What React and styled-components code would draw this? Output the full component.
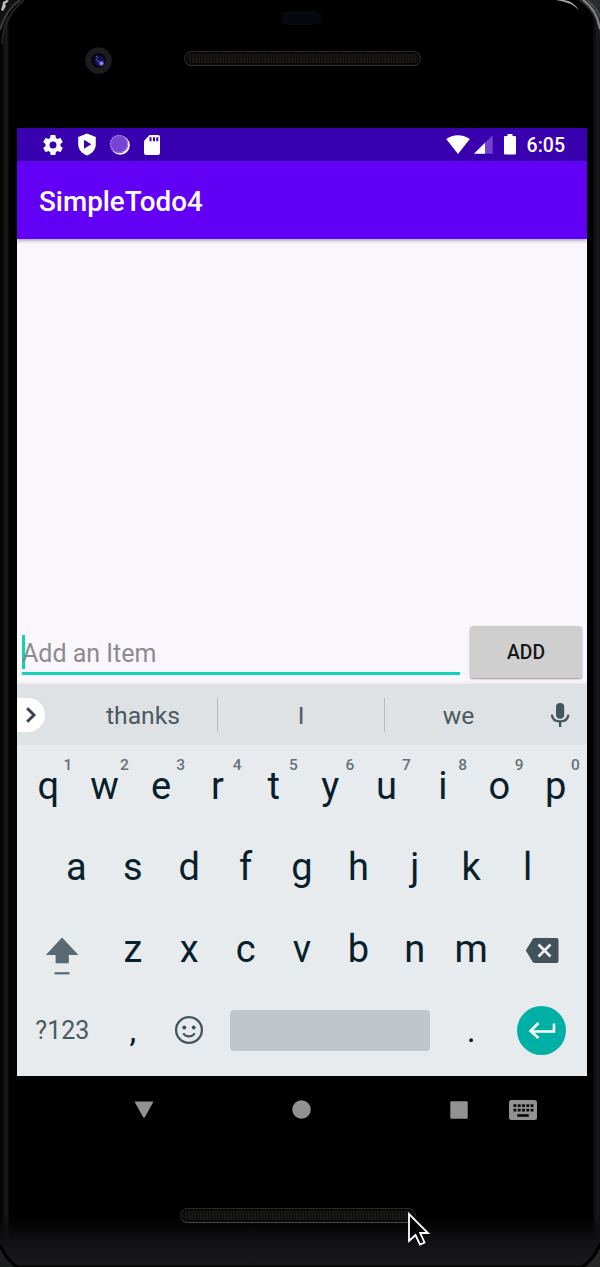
import React from "react";
import styled, { createGlobalStyle } from "styled-components";

const Global = createGlobalStyle`
  *, *::before, *::after { box-sizing: border-box; }
  html, body { margin: 0; padding: 0; background: #08080a; }
  body { font-family: Roboto, "Noto Sans", sans-serif; overflow: hidden; }
  svg { display: block; }
`;

const Device = styled.div`
  position: relative;
  width: 600px;
  height: 1267px;
  display: flex;
  flex-direction: column;
  padding: 0 13px 0 17px;
  overflow: hidden;
  background:
    linear-gradient(to bottom, transparent 0 1214px, rgba(8, 8, 9, 0.6) 1226px, #111113 1242px, #1a1a1c 1265px, #050505 1266px),
    linear-gradient(to right, #020202 0, #060606 2px, #0c0b0c 3px, #141315 5px, #19181a 7px, #09090a 8.5px, #000 10px,
      #000 592px, #0d0b0d 594px, #1b191c 597px, #121113 600px);
`;

const FrameEdges = styled.svg`
  position: absolute;
  inset: 0;
  pointer-events: none;
`;

const TopBezel = styled.div`
  height: 128px;
  flex: none;
  display: grid;
  grid-template-columns: 167px 237px 1fr;
  grid-template-rows: 11px 14px 1fr;
`;

const Sensor = styled.div`
  grid-area: 2 / 2;
  justify-self: center;
  width: 41px;
  height: 14px;
  border-radius: 7px;
  background: #060810;
  margin-left: -3px;
`;

const CameraSlot = styled.div`
  grid-area: 3 / 1;
  padding: 22px 0 0 68px;
`;

const SpeakerSlot = styled.div`
  grid-area: 3 / 2;
  padding-top: 26px;
`;

const Speaker = styled.div`
  width: ${(p) => p.$width}px;
  height: 15px;
  border-radius: 8px;
  border: 1px solid #29282a;
  border-bottom: 1.5px solid ${(p) => p.$rim};
  padding: 2px;
  background: #090909;
  &::before {
    content: "";
    display: block;
    height: 100%;
    border-radius: 5px;
    background: repeating-linear-gradient(to right, #1b1916 0 1px, #0e0d0c 1px 2px, #171512 2px 3px);
  }
`;

const Screen = styled.main`
  width: 570px;
  height: 948px;
  flex: none;
  display: flex;
  flex-direction: column;
  overflow: hidden;
  background: #f9f7fb;
`;

const StatusBar = styled.div`
  height: 33px;
  flex: none;
  display: flex;
  align-items: center;
  justify-content: space-between;
  padding: 0 22px 0 23.5px;
  background: #3900b0;
  color: #fff;
`;

const StatusIcons = styled.div`
  display: flex;
  align-items: center;
  gap: ${(p) => p.$gap}px;
`;

const Clock = styled.span`
  font-size: 19.5px;
  font-weight: 500;
  line-height: 33px;
  margin: 2px 0 0 2px;
`;

const AppBar = styled.header`
  height: 78px;
  flex: none;
  display: flex;
  align-items: center;
  padding: 3px 22px 0;
  background: #6200f5;
  color: #fff;
  box-shadow: 0 1px 4px rgba(0, 0, 0, 0.45);
  position: relative;
`;

const Title = styled.h1`
  margin: 0;
  font-size: 27.8px;
  font-weight: 500;
`;

const Content = styled.section`
  flex: 1;
  display: flex;
  align-items: flex-end;
  padding: 0 5px 6px;
`;

const Field = styled.div`
  width: 438px;
  height: 43px;
  margin: 0 10px 3px 0;
  border-bottom: 3px solid #0fd2b7;
  display: flex;
  align-items: flex-start;
  color: #8d8b8f;
  font-size: 25px;
`;

const Caret = styled.i`
  width: 3px;
  height: 34px;
  margin: 3px -3px 0 0;
  background: #0fd2b7;
`;

const Hint = styled.span`
  line-height: 30px;
  margin-top: 7px;
`;

const AddButton = styled.button`
  width: 112px;
  height: 52px;
  border: 0;
  padding: 0;
  border-radius: 3px;
  background: #cfcfd0;
  color: #161616;
  font: 500 19.3px Roboto, sans-serif;
  box-shadow: 0 1px 2px rgba(0, 0, 0, 0.4);
`;

const Suggestions = styled.div`
  height: 61px;
  flex: none;
  display: flex;
  align-items: center;
  background: #dee2e5;
  box-shadow: 0 -1px 3px #e5e7e9;
`;

const Expand = styled.div`
  width: 28px;
  height: 34px;
  border-radius: 0 17px 17px 0;
  background: #fff;
  display: flex;
  align-items: center;
  padding-left: 8px;
  margin-top: 1px;
`;

const Suggestion = styled.div`
  width: ${(p) => p.$width}px;
  height: 34px;
  line-height: 36px;
  text-align: center;
  font-size: 24.7px;
  color: #4b5961;
  padding-left: ${(p) => p.$shift || 0}px;
  border-right: ${(p) => (p.$divided ? "1.5px solid #b6bcc0" : "0")};
`;

const MicSlot = styled.div`
  flex: 1;
  display: flex;
  justify-content: center;
`;

const Keyboard = styled.div`
  flex: none;
  height: 331px;
  padding: 0 3px;
  background: #e7ebee;
`;

const KeyRow = styled.div`
  height: 81.5px;
  display: flex;
  justify-content: center;
  align-items: stretch;
`;

const Key = styled.div`
  width: ${(p) => p.$width || 56.4}px;
  padding-top: ${(p) => p.$drop || 0}px;
  display: flex;
  align-items: center;
  justify-content: center;
  position: relative;
  font-size: ${(p) => p.$size || 38}px;
  color: ${(p) => p.$color || "#07202a"};
`;

const Digit = styled.sup`
  position: absolute;
  top: 11px;
  left: 43.5px;
  font-size: 15.5px;
  font-weight: 500;
  line-height: 18px;
  color: #65727a;
`;

const Space = styled.div`
  width: 200px;
  height: 41px;
  border-radius: 4px;
  background: #c1c6ca;
`;

const Enter = styled.div`
  width: 49px;
  height: 49px;
  border-radius: 50%;
  background: #00b0a5;
  display: flex;
  align-items: center;
  justify-content: center;
`;

const NavBar = styled.nav`
  height: 67px;
  flex: none;
  display: flex;
  align-items: center;
  padding-left: 117px;
`;

const Gap = styled.span`
  width: ${(p) => p.$width}px;
`;

const BottomBezel = styled.div`
  flex: 1;
  padding: 65px 0 0 163px;
`;

const Pointer = styled.svg`
  position: absolute;
  left: 404.5px;
  top: 1210px;
`;

const Camera = () => (
  <svg width="28" height="28" viewBox="0 0 28 28">
    <circle cx="13.500" cy="13.500" r="13.300" fill="#1c1b1e" />
    <circle cx="13.500" cy="13.500" r="7.500" fill="#080815" />
    <circle cx="14.500" cy="14" r="5" fill="#13104a" />
    <path d="M11 9l2 2M11 12l3 3" stroke="#4744ab" strokeWidth="1.400" />
    <circle cx="16.300" cy="16.300" r="2.600" fill="#5145b9" />
    <circle cx="16.500" cy="16.500" r="1.300" fill="#a5a0e8" />
  </svg>
);

const Gear = () => (
  <svg width="24" height="24" viewBox="0 0 24 24" fill="#fff">
    <path d="M19.43 12.98c.04-.32.07-.64.07-.98s-.03-.66-.07-.98l2.11-1.65c.19-.15.24-.42.12-.64l-2-3.46c-.12-.22-.39-.3-.61-.22l-2.49 1c-.52-.4-1.08-.73-1.69-.98l-.38-2.65A.49.49 0 0 0 14 2h-4c-.25 0-.46.18-.49.42l-.38 2.65c-.61.25-1.17.59-1.69.98l-2.49-1c-.23-.09-.49 0-.61.22l-2 3.46c-.13.22-.07.49.12.64l2.11 1.65c-.04.32-.07.65-.07.98s.03.66.07.98l-2.11 1.65c-.19.15-.24.42-.12.64l2 3.46c.12.22.39.3.61.22l2.49-1c.52.4 1.08.73 1.69.98l.38 2.65c.03.24.24.42.49.42h4c.25 0 .46-.18.49-.42l.38-2.65c.61-.25 1.17-.59 1.69-.98l2.49 1c.23.09.49 0 .61-.22l2-3.46c.12-.22.07-.49-.12-.64l-2.11-1.65zM12 15.5A3.5 3.5 0 1 1 12 8.500a3.5 3.5 0 0 1 0 7z" />
  </svg>
);

const Shield = () => (
  <svg width="20" height="23" viewBox="0 0 20 23">
    <path d="M10 .6l8.800 3.300v7.300c0 5-3.500 9.300-8.800 11.200C4.700 20.500 1.200 16.200 1.200 11.200V3.900z" fill="#fff" />
    <path d="M7 6.800l7.300 4.500L7 15.800z" fill="#3900b0" />
  </svg>
);

const Disc = () => (
  <svg width="22" height="22" viewBox="0 0 22 22">
    <circle cx="11.200" cy="11.200" r="9.600" fill="#fff" />
    <circle cx="10" cy="10" r="9.200" fill="#7844d3" />
    <circle cx="10" cy="10" r="8.500" fill="none" stroke="#a98ae2" strokeWidth="1.300" strokeDasharray="1.500 1.400" />
  </svg>
);

const SdCard = () => (
  <svg width="18" height="22" viewBox="0 0 18 22">
    <path d="M6.500 1H15a2 2 0 0 1 2 2v16a2 2 0 0 1-2 2H3a2 2 0 0 1-2-2V7z" fill="#fff" />
    <path d="M7.500 3.300v4M11 3.300v4M14.300 3.300v4" stroke="#3900b0" strokeWidth="2" />
  </svg>
);

const Wifi = () => (
  <svg width="24" height="21" viewBox="0 0 24 21">
    <path d="M.2 5.100C6.700-.2 17.300-.2 23.800 5.100L12 20z" fill="#fff" />
  </svg>
);

const Signal = () => (
  <svg width="19" height="19" viewBox="0 0 19 19">
    <path d="M0 18.800L18.700.2v18.600z" fill="#7542cf" />
    <path d="M0 18.800L11 7.800v11z" fill="#fff" />
  </svg>
);

const Battery = () => (
  <svg width="12" height="21" viewBox="0 0 12 21">
    <path d="M3.500 0h5v2H11a1 1 0 0 1 1 1v16.500a1 1 0 0 1-1 1H1a1 1 0 0 1-1-1V3a1 1 0 0 1 1-1h2.500z" fill="#fff" />
  </svg>
);

const Chevron = () => (
  <svg width="12" height="18" viewBox="0 0 12 18">
    <path d="M2.200 2.200L9 9l-6.800 6.800" fill="none" stroke="#35444c" strokeWidth="2.900" />
  </svg>
);

const Mic = () => (
  <svg width="20" height="26" viewBox="0 0 20 26">
    <rect x="6" y="1" width="8.200" height="15.800" rx="4.100" fill="#46555d" />
    <path d="M1.800 12.700c.4 4.400 3.700 6.800 8.300 6.800s7.900-2.400 8.300-6.800M10.100 19v6" fill="none" stroke="#46555d" strokeWidth="2.300" />
  </svg>
);

const Shift = () => (
  <svg width="34" height="40" viewBox="0 0 34 40">
    <path d="M17 1.500L33.500 19H23.800v8.300H10.600V19H.8z" fill="#5a6971" />
    <path d="M9.500 37.300h15" stroke="#5a6971" strokeWidth="2.200" />
  </svg>
);

const Smile = () => (
  <svg width="30" height="30" viewBox="0 0 30 30" fill="none" stroke="#46555d">
    <circle cx="15" cy="15" r="12.900" strokeWidth="2.300" />
    <circle cx="10.300" cy="12.600" r="2" fill="#46555d" stroke="none" />
    <circle cx="19.700" cy="12.600" r="2" fill="#46555d" stroke="none" />
    <path d="M9.200 18.300c2.400 4.100 9.200 4.100 11.600 0" strokeWidth="2.200" />
  </svg>
);

const Backspace = () => (
  <svg width="34" height="27" viewBox="0 0 34 27">
    <path d="M9.800 1H31.500a2 2 0 0 1 2 2v21a2 2 0 0 1-2 2H9.800q-1.400 0-2.200-1.300L.8 13.500 7.600 2.300Q8.400 1 9.800 1z" fill="#43525a" />
    <path d="M13.500 7.500l12 12M25.500 7.500l-12 12" stroke="#eef1f3" strokeWidth="2.700" />
  </svg>
);

const Return = () => (
  <svg width="28" height="18" viewBox="0 0 28 18">
    <path d="M26 2.500v8H3M10.500 2L2.500 10l8 7" fill="none" stroke="#fff" strokeWidth="2.600" />
  </svg>
);

const KeyboardIcon = () => (
  <svg width="28" height="20" viewBox="0 0 28 20">
    <rect width="28" height="20" rx="2.500" fill="#929292" />
    <path d="M4.500 5.700h20M4.500 10.100h20" stroke="#0b0b0b" strokeWidth="2.800" strokeDasharray="2.900 1.370" />
    <path d="M8.300 15.500h11.500" stroke="#0b0b0b" strokeWidth="2.700" />
  </svg>
);

const topRow = "qwertyuiop".split("");
const homeRow = "asdfghjkl".split("");
const lowerRow = "zxcvbnm".split("");

export default function App() {
  return (
    <>
      <Global />
      <Device>
        <FrameEdges width="600" height="1267" viewBox="0 0 600 1267" fill="none">
          <path d="M0 0H22Q2 10 0 34z" fill="#121212" />
          <path d="M3 2l4-2 2 1-4 3 1 2-3 5-2-1 1-3z" fill="#bdbdbd" />
          <path d="M0 30Q5 11 20 0" stroke="#3b3c3b" strokeWidth="2" />
          <path d="M2 44Q4 16 24 0" stroke="#222322" strokeWidth="2" />
          <path d="M578 0H600V38Q597 12 578 0z" fill="#2a2b2b" />
          <path d="M583 0Q597 10 600 29" stroke="#83888c" strokeWidth="2" />
          <path d="M587 0Q596 7 600 17" stroke="#474a4c" strokeWidth="2" />
          <path d="M556 0Q571 2 579 10Q573 1 564 0z" fill="#a3a8ab" />
          <path d="M0 1247Q5 1259 16 1267H0z" fill="#1c1d1d" />
          <path d="M0 1245Q5 1258 17 1267" stroke="#000" strokeWidth="3" />
          <path d="M600 1247Q596 1259 585 1267H600z" fill="#252525" />
          <path d="M600 1244Q595 1258 582 1267" stroke="#000" strokeWidth="3" />
        </FrameEdges>
        <TopBezel>
          <Sensor />
          <CameraSlot><Camera /></CameraSlot>
          <SpeakerSlot><Speaker $width={237} $rim="#343334" /></SpeakerSlot>
        </TopBezel>
        <Screen>
          <StatusBar>
            <StatusIcons $gap={12}>
              <Gear /><Shield /><Disc /><SdCard />
            </StatusIcons>
            <StatusIcons $gap={4}>
              <Wifi /><Signal /><Gap $width={3} /><Battery /><Gap $width={1} /><Clock>6:05</Clock>
            </StatusIcons>
          </StatusBar>
          <AppBar><Title>SimpleTodo4</Title></AppBar>
          <Content>
            <Field><Caret /><Hint>Add an Item</Hint></Field>
            <AddButton>ADD</AddButton>
          </Content>
          <Suggestions>
            <Expand><Chevron /></Expand>
            <Suggestion $width={173} $divided $shift={24}>thanks</Suggestion>
            <Suggestion $width={167} $divided>I</Suggestion>
            <Suggestion $width={147}>we</Suggestion>
            <MicSlot><Mic /></MicSlot>
          </Suggestions>
          <Keyboard>
            <KeyRow>
              {topRow.map((letter, i) => (
                <Key key={letter}>{letter}<Digit>{(i + 1) % 10}</Digit></Key>
              ))}
            </KeyRow>
            <KeyRow>
              {homeRow.map((letter) => <Key key={letter}>{letter}</Key>)}
            </KeyRow>
            <KeyRow>
              <Key $width={84.6} $drop={14}><Shift /></Key>
              {lowerRow.map((letter) => <Key key={letter}>{letter}</Key>)}
              <Key $width={84.6} $drop={3}><Backspace /></Key>
            </KeyRow>
            <KeyRow>
              <Key $width={84.6} $size={25} $color="#4b5961">?123</Key>
              <Key $size={34}>,</Key>
              <Key><Smile /></Key>
              <Key $width={225.6}><Space /></Key>
              <Key $size={34}>.</Key>
              <Key $width={84.6}><Enter><Return /></Enter></Key>
            </KeyRow>
          </Keyboard>
        </Screen>
        <NavBar>
          <svg width="20" height="17" viewBox="0 0 20 17">
            <path d="M1.500.5h17q1 0 .5 1l-8 14.500q-1 1.500-2 0L1 1.500q-.5-1 .5-1z" fill="#929292" />
          </svg>
          <Gap $width={138} />
          <svg width="19" height="19"><circle cx="9.500" cy="9.500" r="9.300" fill="#929292" /></svg>
          <Gap $width={139} />
          <svg width="18" height="18"><rect x=".3" y=".3" width="17.400" height="17.400" rx="1" fill="#929292" /></svg>
          <Gap $width={41} />
          <KeyboardIcon />
        </NavBar>
        <BottomBezel><Speaker $width={236} $rim="#49454a" /></BottomBezel>
        <Pointer width="26" height="38" viewBox="0 0 26 38">
          <path d="M4 4v27l6.500-6 4.500 9.500 4.500-2-4.300-9.500H23z" fill="#000" stroke="#fff" strokeWidth="1.800" />
        </Pointer>
      </Device>
    </>
  );
}
